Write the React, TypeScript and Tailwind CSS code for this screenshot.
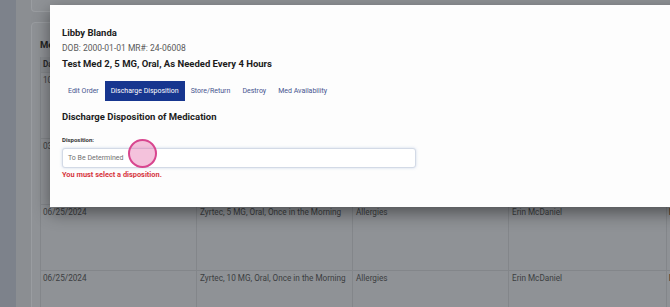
import React from "react";

const rows = [
  { date: "10/01/2024", med: "", reason: "", by: "" },
  { date: "03/12/2024", med: "", reason: "", by: "" },
  { date: "06/25/2024", med: "Zyrtec, 5 MG, Oral, Once in the Morning", reason: "Allergies", by: "Erin McDaniel" },
  { date: "06/25/2024", med: "Zyrtec, 10 MG, Oral, Once in the Morning", reason: "Allergies", by: "Erin McDaniel" },
];

const tabs = ["Edit Order", "Discharge Disposition", "Store/Return", "Destroy", "Med Availability"];

function BackgroundPage() {
  return (
    <div className="flex h-full">
      <div className="w-[16px] shrink-0 bg-[#7d828b]" />
      <div className="flex-1 pl-[15px]">
        <div className="h-[12px] rounded-b-[4px] border border-t-0 border-[#9a9da1] bg-[#8f9296]" />
        <div className="mt-[10px] h-[300px] rounded-[4px] border border-[#9a9da1] bg-[#8f9296] pl-[8px] pt-[16px]">
          <div className="text-[9.5px] font-bold leading-[12px] text-[#222]">Medications</div>
          <table className="mt-[6px] w-[640px] table-fixed border-collapse text-[8.2px] leading-[10px] text-[#3c3e41]">
            <thead>
              <tr className="h-[15px] bg-[#898c90]">
                <th className="w-[156px] border-x border-[#83868a] px-[2px] text-left font-bold text-[#2a2b2d]">Date</th>
                <th className="w-[156px] border-x border-[#83868a] px-[2px] text-left font-bold text-[#2a2b2d]">Medication</th>
                <th className="w-[156px] border-x border-[#83868a] px-[2px] text-left font-bold text-[#2a2b2d]">Reason</th>
                <th className="w-[158px] border-x border-[#83868a] px-[2px] text-left font-bold text-[#2a2b2d]">Ordered By</th>
                <th className="border-x border-[#83868a]" />
              </tr>
            </thead>
            <tbody>
              {rows.map((r, i) => (
                <tr key={i} className="h-[66px] border-t border-[#83868a] align-top">
                  <td className="border-x border-[#83868a] px-[2px] pt-[2px]">{r.date}</td>
                  <td className="whitespace-nowrap border-x border-[#83868a] px-[3px] pt-[2px]">{r.med}</td>
                  <td className="border-x border-[#83868a] px-[3px] pt-[2px]">{r.reason}</td>
                  <td className="border-x border-[#83868a] px-[3px] pt-[2px]">{r.by}</td>
                  <td className="border-x border-[#83868a] px-[2px] pt-[2px] font-bold text-[#2a2b2d]">N</td>
                </tr>
              ))}
            </tbody>
          </table>
        </div>
      </div>
    </div>
  );
}

function DispositionModal() {
  return (
    <div className="absolute left-[50px] top-[5px] h-[202px] w-[640px] bg-[#fdfdfd] pl-[12px] pt-[22px] shadow-[0_6px_16px_rgba(0,0,0,0.45)]">
      <div className="text-[9.5px] font-bold leading-[12px] text-[#1c1c1c]">Libby Blanda</div>
      <div className="mt-[4px] text-[8.5px] leading-[10px] text-[#5a5a5a]">DOB: 2000-01-01 MR#: 24-06008</div>
      <div className="mt-[5px] text-[9.5px] font-bold leading-[12px] text-[#1c1c1c]">
        Test Med 2, 5 MG, Oral, As Needed Every 4 Hours
      </div>
      <div className="mt-[11px] flex h-[20px] items-stretch text-[7px]">
        {tabs.map((t) => (
          <div
            key={t}
            className={
              t === "Discharge Disposition"
                ? "flex items-center bg-[#17368f] px-[6px] text-white"
                : "flex items-center px-[6px] text-[#46558f]"
            }
          >
            {t}
          </div>
        ))}
      </div>
      <div className="mt-[10px] text-[9.5px] font-bold leading-[12px] text-[#1c1c1c]">
        Discharge Disposition of Medication
      </div>
      <div className="mt-[13px] text-[6px] font-bold leading-[8px] text-[#333]">Disposition:</div>
      <div className="relative mt-[4px] flex h-[20px] w-[354px] items-center rounded-[3px] border border-[#d3dae6] bg-white pl-[5px] text-[7px] text-[#707070] shadow-[0_0_3px_rgba(120,150,200,0.35)]">
        To Be Determined
        <div className="absolute left-[65px] top-[-10px] h-[29px] w-[29px] rounded-full border-2 border-[#d8468f] bg-[rgba(228,110,172,0.42)]" />
      </div>
      <div className="mt-[2px] text-[7.4px] font-bold leading-[9px] text-[#d6363e]">You must select a disposition.</div>
    </div>
  );
}

export default function App() {
  return (
    <div
      className="relative h-[307px] w-[670px] overflow-hidden bg-[#8b8e92]"
      style={{ fontFamily: "Roboto, 'Liberation Sans', sans-serif" }}
    >
      <BackgroundPage />
      <DispositionModal />
    </div>
  );
}
